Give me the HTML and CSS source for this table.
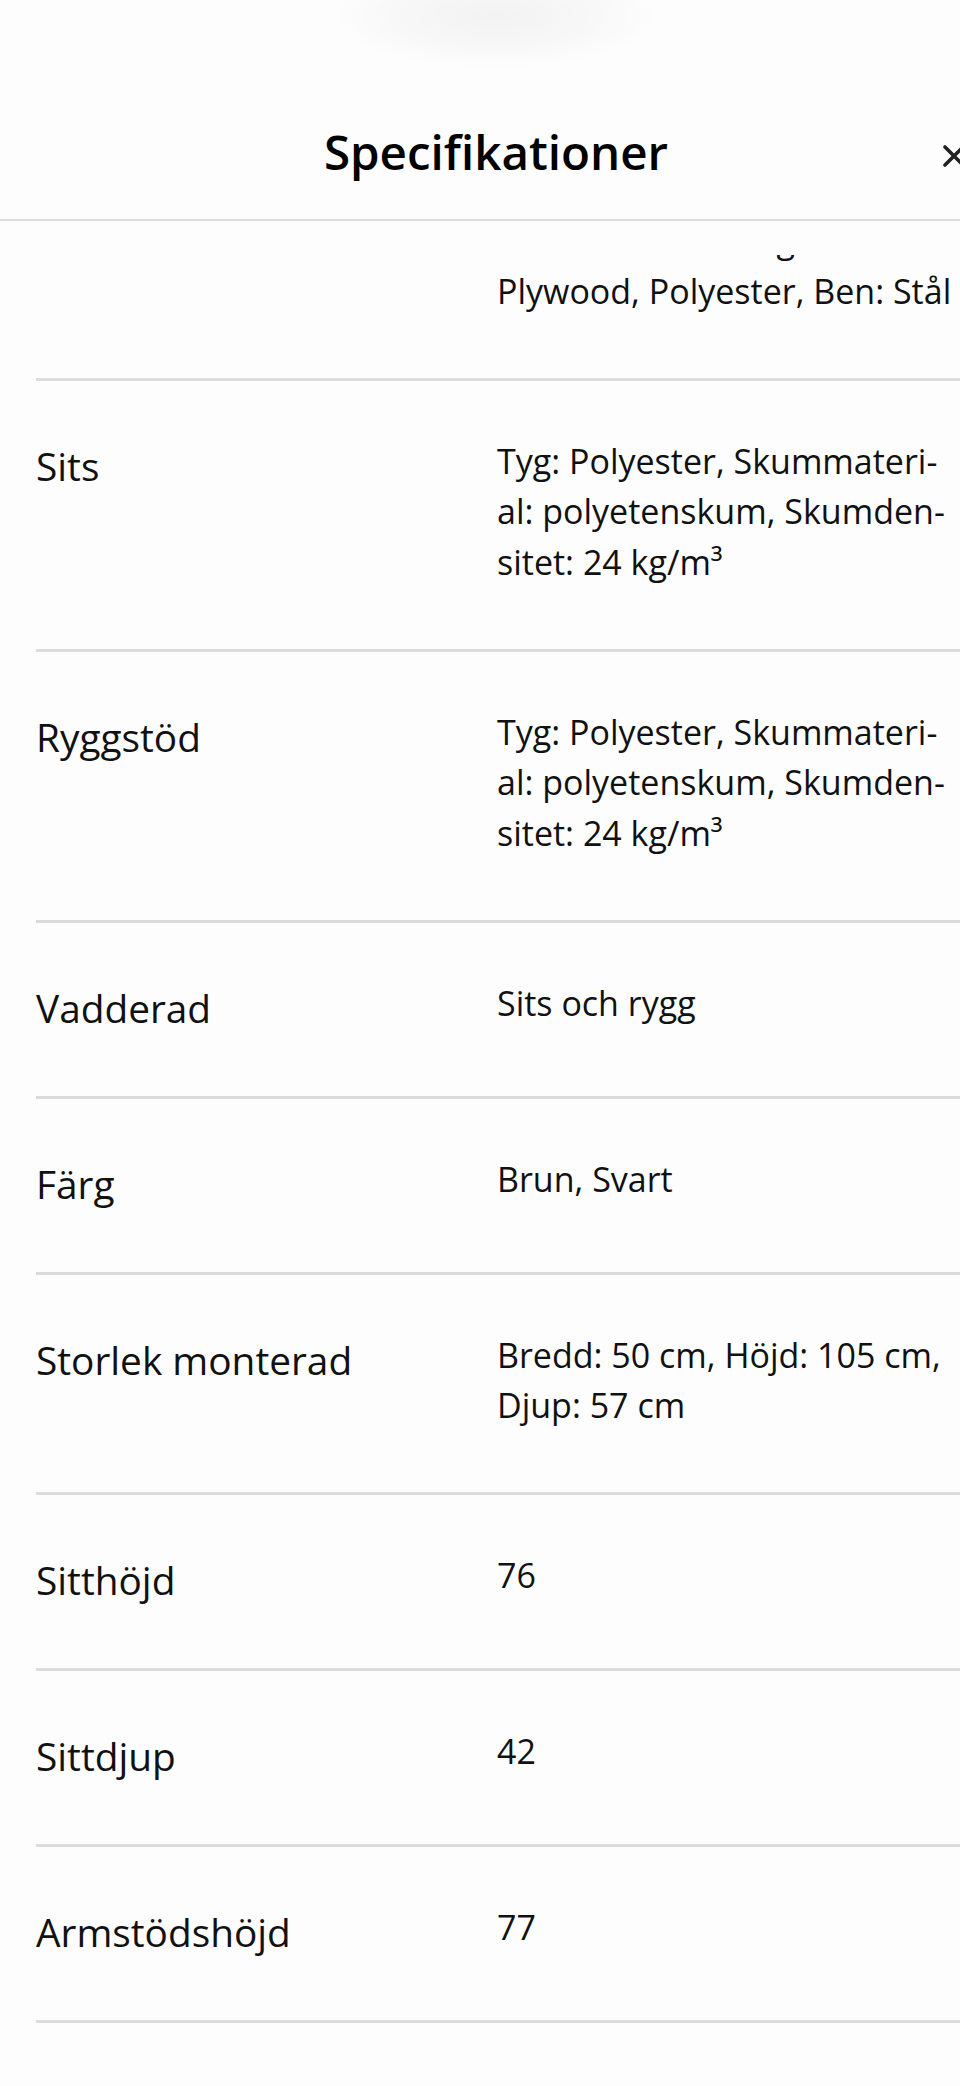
FILE: index.html
```html
<!DOCTYPE html>
<html lang="sv">
<head>
    <meta charset="UTF-8">
    <meta name="viewport" content="width=device-width, initial-scale=1.0">
    <title>Specifikationer</title>
    <link rel="stylesheet" href="styles.css">
</head>
<body>
  <div class="sheet">
      <div class="sheet-glow"></div>

      <div class="sheet-header">
          <h1>Specifikationer</h1>
          <button class="close" type="button" aria-label="Stäng">
              <svg viewBox="0 0 24 24" width="24" height="24">
                  <path d="M3 3 L21 21 M21 3 L3 21" stroke="#222" stroke-width="3.6" stroke-linecap="round" fill="none"/>
              </svg>
          </button>
      </div>

      <!-- listan är scrollad, första raden syns bara delvis -->
      <div class="sheet-body">
          <dl class="spec-list">
              <div class="spec-row">
                  <dt>Material</dt>
                  <dd>Formpressad bokfanér, Ramen: Ekfanering och Plywood, Polyester, Ben: Stål</dd>
              </div>
              <div class="spec-row">
                  <dt>Sits</dt>
                  <dd>Tyg: Polyester, Skummateri&shy;al: polyetenskum, Skumden&shy;sitet: 24 kg/m³</dd>
              </div>
              <div class="spec-row">
                  <dt>Ryggstöd</dt>
                  <dd>Tyg: Polyester, Skummateri&shy;al: polyetenskum, Skumden&shy;sitet: 24 kg/m³</dd>
              </div>
              <div class="spec-row">
                  <dt>Vadderad</dt>
                  <dd>Sits och rygg</dd>
              </div>
              <div class="spec-row">
                  <dt>Färg</dt>
                  <dd>Brun, Svart</dd>
              </div>
              <div class="spec-row">
                  <dt>Storlek monterad</dt>
                  <dd>Bredd: 50 cm, Höjd: 105 cm, Djup: 57 cm</dd>
              </div>
              <div class="spec-row">
                  <dt>Sitthöjd</dt>
                  <dd>76</dd>
              </div>
              <div class="spec-row">
                  <dt>Sittdjup</dt>
                  <dd>42</dd>
              </div>
              <div class="spec-row">
                  <dt>Armstödshöjd</dt>
                  <dd>77</dd>
              </div>
          </dl>
      </div>
  </div>
</body>
</html>
```

FILE: styles.css
```css
html, body {
    margin: 0;
    padding: 0;
    background-color: #fdfdfd;
    overflow-x: hidden;
}
body {
    font-family: "Open Sans", "Noto Sans", sans-serif;
    color: #111;
}
.sheet {
    position: relative;
    width: 992px;
    height: 2086px;
    background-color: #fdfdfd;
    overflow: hidden;
}
/* skuggan från handtaget längst upp */
.sheet-glow {
    position: absolute;
    left: 330px;
    top: -40px;
    width: 330px;
    height: 110px;
    background: radial-gradient(ellipse at center, rgba(0, 0, 0, 0.045) 0%, rgba(0, 0, 0, 0.02) 45%, rgba(0, 0, 0, 0) 70%);
    pointer-events: none;
}
.sheet-header {
    display: grid;
    grid-template-columns: 1fr auto 1fr;
    align-items: center;
    padding: 119px 0 35px;
    border-bottom: 2px solid #dcdcdc;
}
.sheet-header h1 {
    grid-column: 2;
    margin: 0;
    font-size: 47.5px;
    font-weight: 600;
    line-height: 65px;
    color: #000;
}
.close {
    grid-column: 3;
    justify-self: end;
    margin: 9px 26px 0 0;
    padding: 0;
    border: none;
    background: none;
    width: 24px;
    height: 24px;
}
.close svg {
    display: block;
}
.sheet-body {
    margin-top: 34px;
    height: 1831px;
    overflow: hidden;
}
.spec-list {
    margin: -145.5px 0 0 0;
    padding: 0 0 0 36px;
}
.spec-row {
    display: grid;
    grid-template-columns: 461px 457px;
    align-items: start;
    padding: 57px 0 59.5px;
    border-bottom: 3px solid #dcdcdc;
}
.spec-row dt {
    margin: 0;
    font-size: 38.8px;
    line-height: 56.5px;
}
.spec-row dd {
    margin: -2px 0 2px;
    font-size: 34px;
    line-height: 50.5px;
}
```
